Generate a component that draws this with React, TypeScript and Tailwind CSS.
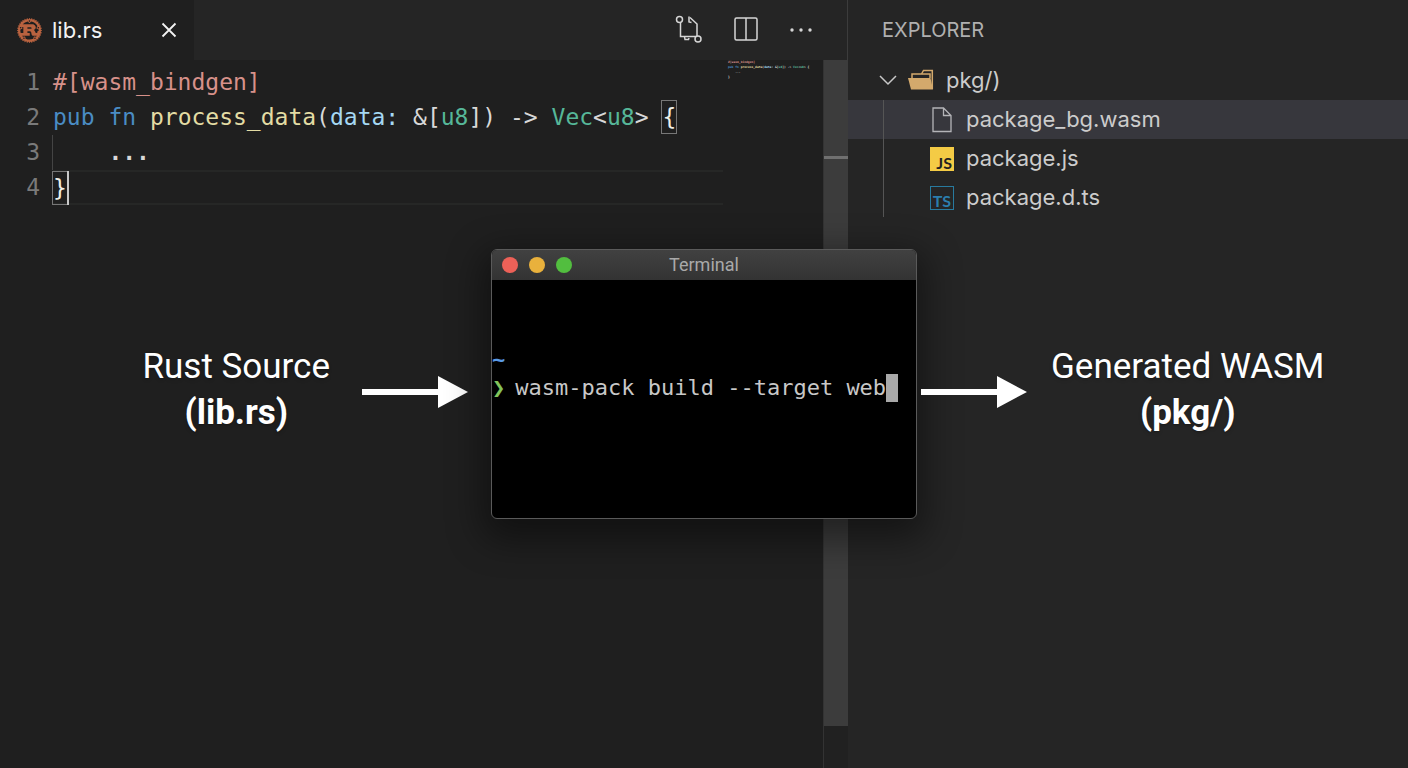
import type { ReactNode } from "react";
import { SiRust } from "react-icons/si";

const mono = "font-['DejaVu_Sans_Mono','Liberation_Mono',monospace]";

type Token = { text: string; color: string; boxed?: boolean };

const lines: Token[][] = [
  [{ text: "#[wasm_bindgen]", color: "text-[#d7918a]" }],
  [
    { text: "pub fn ", color: "text-[#4a8cc4]" },
    { text: "process_data", color: "text-[#e3dca4]" },
    { text: "(", color: "text-[#d8d8d8]" },
    { text: "data:", color: "text-[#a5d8f3]" },
    { text: " &[", color: "text-[#d8d8d8]" },
    { text: "u8", color: "text-[#56b799]" },
    { text: "]) -> ", color: "text-[#d8d8d8]" },
    { text: "Vec", color: "text-[#56b799]" },
    { text: "<", color: "text-[#d8d8d8]" },
    { text: "u8", color: "text-[#56b799]" },
    { text: "> ", color: "text-[#d8d8d8]" },
    { text: "{", color: "text-[#f0f0e8]", boxed: true },
  ],
  [{ text: "    ...", color: "font-bold text-[#d8d8d8]" }],
  [{ text: "}", color: "text-[#f0f0e8]", boxed: true }],
];

function CompareIcon() {
  return (
    <svg width="28" height="28" viewBox="0 0 28 28" fill="none" stroke="#d6d6d6" strokeWidth="1.5">
      <circle cx="4.500" cy="4.500" r="3" />
      <circle cx="23" cy="24" r="3" />
      <path d="M5.500 7.500V21.500H21M22 21V9L15 2.500" />
      <path d="M14 1.500v5.500l2.500.500M9.500 21.500l.500 3h3.500l.500-1.500" />
    </svg>
  );
}

function SplitIcon() {
  return (
    <svg width="24" height="24" viewBox="0 0 24 24" fill="none" stroke="#d6d6d6" strokeWidth="1.5">
      <rect x="1" y="1" width="22" height="22" rx="1.5" />
      <path d="M12 1v22" />
    </svg>
  );
}

function MoreIcon() {
  return (
    <svg width="24" height="24" viewBox="0 0 24 24" fill="#d6d6d6">
      <circle cx="3" cy="13" r="1.7" />
      <circle cx="12" cy="13" r="1.7" />
      <circle cx="21" cy="13" r="1.7" />
    </svg>
  );
}

function FolderIcon() {
  return (
    <svg width="26" height="22" viewBox="0 0 26 22">
      <path d="M4 9V5h9.5l2-3.500H24.300V20" fill="none" stroke="#d3a96c" strokeWidth="1.500" />
      <path d="M14 5h8V9" fill="none" stroke="#d3a96c" strokeWidth="1.500" />
      <path d="M0 9h22.500L25 20.500H3z" fill="#d3a96c" />
    </svg>
  );
}

function FileIcon() {
  return (
    <svg width="24" height="26" viewBox="0 0 24 26" fill="none" stroke="#b4b4b8" strokeWidth="1.3">
      <path d="M3 1h10.500l7.500 7.500V24.500H3zM13.500 1v7.500H21" />
    </svg>
  );
}

function JsIcon() {
  return (
    <span className="flex h-6 w-6 items-end justify-end bg-[#f4cb45] pr-0.5 font-['Lato',sans-serif] text-base leading-4 font-bold text-[#222]">
      JS
    </span>
  );
}

function TsIcon() {
  return (
    <span className="flex h-6 w-6 items-end justify-end border border-[#287a9e] pr-0.5 font-['Lato',sans-serif] text-base leading-4 font-bold text-[#2b7eae]">
      TS
    </span>
  );
}

function Arrow() {
  return (
    <svg className="shrink-0" width="106" height="38" viewBox="0 -4 106 38" fill="#fff">
      <path d="M0 14h76V1l30 16-30 16V20H0z" />
    </svg>
  );
}

function Code() {
  return (
    <ol className={`min-w-0 flex-1 pt-[5px] text-[23px] leading-[35px] whitespace-pre ${mono}`}>
      {lines.map((tokens, i) => (
        <li key={i} className="flex h-[35px]">
          <span className="w-10 shrink-0 text-right text-[#7a7a7a]">{i + 1}</span>
          <div
            className={`ml-3 flex-1 border-l ${i === 2 ? "border-l-[#444]" : "border-l-transparent"} ${
              i === 3 ? "flex items-center border-y-2 border-y-[#262726]" : ""
            }`}
          >
            {tokens.map((t, j) => (
              <span
                key={j}
                className={`${t.color} ${t.boxed ? "inline-block leading-8 outline outline-[#777]" : ""}`}
              >
                {t.text}
              </span>
            ))}
            {i === 3 && <span className="h-[34px] w-0.5 bg-[#c8c8c8]" />}
          </div>
        </li>
      ))}
    </ol>
  );
}

function Minimap() {
  return (
    <div aria-hidden="true" className={`w-24 shrink-0 overflow-hidden pl-px text-[3px] leading-[5px] font-bold whitespace-pre ${mono}`}>
      {lines.map((tokens, i) => (
        <div key={i}>
          {tokens.map((t, j) => (
            <span key={j} className={t.color}>{t.text}</span>
          ))}
        </div>
      ))}
    </div>
  );
}

function Editor() {
  return (
    <section className="flex min-w-0 flex-1 flex-col bg-[#1f1f1f]">
      <header className="flex h-15 shrink-0 border-r border-[#3c3c3c] bg-[#252525]">
        <div className="flex w-[194px] items-center bg-[#1f1f1f] pl-[17px]">
          <SiRust size={25} color="#b9623f" />
          <span className="ml-2.5 flex-1 font-['Inter',sans-serif] text-[22px] text-[#f2f2f2]">lib.rs</span>
          <button aria-label="Close tab" className="mr-[17px]">
            <svg width="16" height="16" viewBox="0 0 16 16" stroke="#f2f2f2" strokeWidth="1.8">
              <path d="M1.5 1.5l13 13M14.5 1.5l-13 13" />
            </svg>
          </button>
        </div>
        <div className="flex flex-1 items-center justify-end gap-[31px] pr-[34px] pb-0.5">
          <button aria-label="Compare changes"><CompareIcon /></button>
          <button aria-label="Split editor"><SplitIcon /></button>
          <button aria-label="More actions"><MoreIcon /></button>
        </div>
      </header>
      <div className="flex flex-1">
        <Code />
        <div className="w-1 shrink-0" />
        <Minimap />
        <div className="flex w-[25px] shrink-0 flex-col border-l border-[#333] bg-[#212121]">
          <div className="h-[94%] bg-[#3c3c3c] pt-24">
            <div className="h-[3px] bg-[#707070]" />
          </div>
        </div>
      </div>
    </section>
  );
}

function TreeFile({ icon, name, active }: { icon: ReactNode; name: string; active?: boolean }) {
  return (
    <li className={`pl-[35px] ${active ? "bg-[#37373d]" : ""}`}>
      <button className="flex h-[39px] w-full items-center gap-3 border-l border-[#555] pl-[46px] text-left">
        <span className="flex w-6 justify-center">{icon}</span>
        {name}
      </button>
    </li>
  );
}

function Explorer() {
  return (
    <aside className="w-[560px] shrink-0 bg-[#252525] font-['Inter',sans-serif] text-[22px] text-[#cccccc]">
      <h2 className="flex h-15 items-center pl-[34px] text-xl text-[#b0b0b0]">EXPLORER</h2>
      <button className="flex h-10 w-full items-center pl-[30px]">
        <svg width="20" height="12" viewBox="0 0 20 12" fill="none" stroke="#c8c8c8" strokeWidth="1.5">
          <path d="M2 2l8 8 8-8" />
        </svg>
        <span className="mr-3 ml-2.5"><FolderIcon /></span>
        pkg/)
      </button>
      <ul>
        <TreeFile icon={<FileIcon />} name="package_bg.wasm" active />
        <TreeFile icon={<JsIcon />} name="package.js" />
        <TreeFile icon={<TsIcon />} name="package.d.ts" />
      </ul>
    </aside>
  );
}

function Terminal() {
  return (
    <section className="flex h-[270px] flex-col overflow-hidden rounded-md border border-[#5a5a5a] bg-black shadow-[0_12px_36px_8px_rgba(0,0,0,0.45)]">
      <header className="grid h-[30px] shrink-0 grid-cols-[1fr_auto_1fr] items-center bg-linear-to-b from-[#414141] to-[#333333] px-2.5">
        <div className="flex gap-[11px]">
          <span className="h-4 w-4 rounded-full bg-[#ed6158]" />
          <span className="h-4 w-4 rounded-full bg-[#e9b13c]" />
          <span className="h-4 w-4 rounded-full bg-[#52be3f]" />
        </div>
        <h2 className="font-['Roboto',sans-serif] text-lg text-[#a9a9a9]">Terminal</h2>
      </header>
      <div className={`flex flex-1 flex-col pt-[66px] text-[22px] leading-7 text-[#c8c8c8] ${mono}`}>
        <p className="font-bold text-[#5b9be6]">~</p>
        <p className="flex items-center whitespace-pre">
          <span className="font-bold text-[#82c45c]">❯</span>
          <span className="ml-2.5">wasm-pack build --target web</span>
          <span className="h-7 w-3 bg-[#a9a9a9]" />
        </p>
      </div>
    </section>
  );
}

function Label({ title, target }: { title: string; target: string }) {
  return (
    <p className="text-center font-['Roboto',sans-serif] text-[35px] leading-[46px] whitespace-nowrap text-white text-shadow-md">
      {title}
      <br />
      <strong className="font-bold">{target}</strong>
    </p>
  );
}

export default function App() {
  return (
    <main className="relative flex min-h-screen">
      <Editor />
      <Explorer />
      {/* build flow, floats over both panels */}
      <div className="absolute inset-0 grid grid-cols-[1fr_426px_1fr] items-center">
        <div className="flex items-center justify-end gap-8 pt-3 pr-[23px]">
          <Label title="Rust Source" target="(lib.rs)" />
          <Arrow />
        </div>
        <Terminal />
        <div className="flex items-center gap-6 pt-3 pl-1">
          <Arrow />
          <Label title="Generated WASM" target="(pkg/)" />
        </div>
      </div>
    </main>
  );
}
